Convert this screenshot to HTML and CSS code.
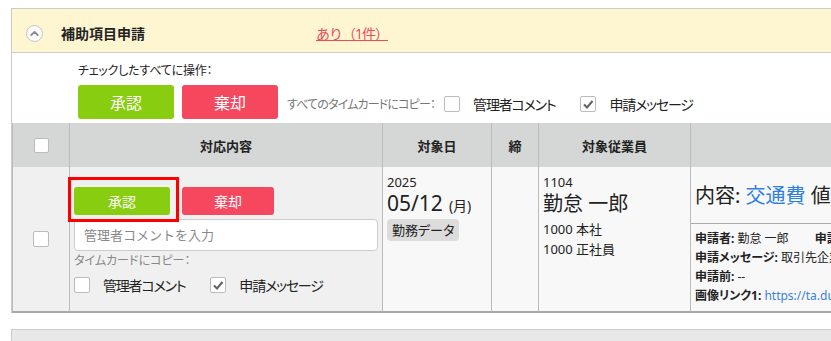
FILE: index.html
```html
<!DOCTYPE html>
<html>
<head>
    <title>補助項目申請</title>
    <link rel="stylesheet" href="styles.css">
</head>
<body>
    <div class="panel">
        <div class="panel-head">
            <span class="toggle">
                <svg width="17" height="17" viewBox="0 0 17 17"><circle cx="8.5" cy="8.5" r="8" fill="#fafafa" stroke="#c4c4c4"/><polyline points="5.3,10 8.5,6.9 11.7,10" fill="none" stroke="#8a8a8a" stroke-width="1.8" stroke-linecap="round" stroke-linejoin="round"/></svg>
            </span>
            <span class="panel-title">補助項目申請</span>
            <a class="count-link" href="#">あり（1件）</a>
        </div>

        <div class="bulk">
            <div class="bulk-label">チェックしたすべてに操作：</div>
            <div class="bulk-actions">
                <button class="btn btn-approve">承認</button>
                <button class="btn btn-reject">棄却</button>
                <div class="copy-group">
                    <span class="copy-label">すべてのタイムカードにコピー：</span>
                    <label class="check"><span class="box"></span>管理者コメント</label>
                    <label class="check check-wide"><span class="box"><svg width="14" height="14" viewBox="0 0 14 14"><polyline points="3,7.5 6,10.5 11.5,4" fill="none" stroke="#666" stroke-width="2.2"/></svg></span>申請メッセージ</label>
                </div>
            </div>
        </div>

        <div class="grid">
            <!-- header -->
            <div class="th"><span class="box"></span></div>
            <div class="th">対応内容</div>
            <div class="th">対象日</div>
            <div class="th">締</div>
            <div class="th">対象従業員</div>
            <div class="th th-last"></div>

            <!-- row -->
            <div class="td td-gray td-center"><span class="box"></span></div>
            <div class="td td-gray td-action">
                <div class="row-btns">
                    <button class="btn btn-sm btn-approve">承認</button>
                    <button class="btn btn-sm btn-reject btn-narrow">棄却</button>
                </div>
                <input class="comment" type="text" placeholder="管理者コメントを入力">
                <div class="copy-small">タイムカードにコピー：</div>
                <div class="row-checks">
                    <label class="check"><span class="box"></span>管理者コメント</label>
                    <label class="check check-wide"><span class="box"><svg width="14" height="14" viewBox="0 0 14 14"><polyline points="3,7.5 6,10.5 11.5,4" fill="none" stroke="#666" stroke-width="2.2"/></svg></span>申請メッセージ</label>
                </div>
                <div class="highlight"></div>
            </div>
            <div class="td td-date">
                <div class="small-num">2025</div>
                <div class="big-date">05/12<span class="dow">(月)</span></div>
                <span class="tag">勤務データ</span>
            </div>
            <div class="td"></div>
            <div class="td td-emp">
                <div class="small-num">1104</div>
                <div class="emp-name">勤怠 一郎</div>
                <div class="emp-line">1000 本社</div>
                <div class="emp-line">1000 正社員</div>
            </div>
            <div class="td td-detail">
                <div class="detail-top">内容: <span class="blue">交通費</span> 値段: 1,200円</div>
                <div class="detail-lines">
                    <div><b>申請者:</b> 勤怠 一郎<span class="spacer"></span><b>申請日時:</b> 2025/05/12 09:30</div>
                    <div><b>申請メッセージ:</b> 取引先企業訪問のため</div>
                    <div><b>申請前:</b> --</div>
                    <div><b>画像リンク1:</b> <a class="link" href="#">https://ta.dummy.example.jp/img/1</a></div>
                </div>
            </div>
        </div>
    </div>

    <div class="panel panel-next"></div>
</body>
</html>
```

FILE: styles.css
```css
body {
    margin: 0;
    overflow: hidden;
    font-family: "Noto Sans", "Noto Sans CJK JP", sans-serif;
    font-feature-settings: "palt";
    color: #222;
    background: #fff;
}
.panel {
    margin: 8px 0 0 11px;
    width: 1000px;
    border: 1px solid #ccc;
    border-bottom: none;
}
.panel-head {
    height: 44px;
    box-sizing: border-box;
    padding: 5px 0 0 14px;
    display: flex;
    align-items: center;
    background: #fef5d1;
    border-bottom: 1px solid #ccc;
}
.toggle {
    display: flex;
    width: 17px;
    height: 17px;
}
.panel-title {
    margin-left: 18px;
    width: 255px;
    font-size: 14px;
    font-weight: bold;
}
.count-link {
    font-size: 14px;
    color: #ee4a5e;
    text-decoration: underline;
    font-feature-settings: normal;
    letter-spacing: -1px;
}
.bulk {
    padding: 9px 0 4px 66px;
}
.bulk-label {
    font-size: 12px;
    line-height: 18px;
    letter-spacing: -0.2px;
}
.bulk-actions {
    display: flex;
    align-items: center;
    margin-top: 5px;
}
.btn {
    border: none;
    border-radius: 3px;
    color: #fff;
    font-family: inherit;
    font-size: 16px;
    width: 96px;
    height: 34px;
    padding: 0;
}
.btn-approve {
    background: #88cd10;
}
.btn-reject {
    background: #f5485f;
    margin-left: 8px;
}
.copy-group {
    display: flex;
    align-items: center;
    margin: 4px 0 0 9px;
}
.copy-label {
    font-size: 12px;
    color: #777;
    margin-right: 9px;
    letter-spacing: -0.85px;
}
.check {
    display: flex;
    align-items: center;
    font-size: 14px;
    letter-spacing: -1.2px;
}
.check-wide {
    margin-left: 25px;
}
.box {
    display: inline-flex;
    align-items: center;
    justify-content: center;
    width: 16px;
    height: 16px;
    box-sizing: border-box;
    border: 1px solid #bbb;
    border-radius: 2px;
    background: #fff;
}
.check .box {
    margin-right: 13px;
}
.grid {
    display: grid;
    grid-template-columns: 57px 313px 109px 47px 152px 300px;
    grid-template-rows: 44px 144px;
    border-left: 1px solid #bbb;
    border-bottom: 2px solid #a8a8a8;
}
.th, .td {
    box-sizing: border-box;
    border-right: 1px solid #bbb;
}
.th {
    background: #d5d6d6;
    font-size: 13px;
    font-weight: bold;
    display: flex;
    align-items: center;
    justify-content: center;
}
.th .box {
    width: 15px;
    height: 15px;
}
.th-last {
    border-right: none;
}
.td {
    background: #f8f8f8;
}
.td-gray {
    background: #f0f0f0;
}
.td-center {
    display: flex;
    align-items: center;
    justify-content: center;
}
.td-action {
    position: relative;
    padding: 20px 4px 0 4px;
}
.row-btns {
    display: flex;
}
.btn-sm {
    height: 28px;
    font-size: 14px;
}
.btn-narrow {
    width: 92px;
    margin-left: 12px;
}
.comment {
    display: block;
    margin-top: 4px;
    width: 304px;
    height: 32px;
    box-sizing: border-box;
    border: 1px solid #ccc;
    border-radius: 4px;
    padding: 0 9px;
    font-family: inherit;
    font-size: 13px;
    background: #fff;
}
.comment::placeholder {
    color: #888;
}
.copy-small {
    margin-top: 3px;
    font-size: 12px;
    line-height: 14px;
    color: #888;
}
.row-checks {
    display: flex;
    margin-top: 7px;
}
.highlight {
    position: absolute;
    left: -2px;
    top: 10px;
    width: 111px;
    height: 45px;
    box-sizing: border-box;
    border: 3px solid #f00;
}
.td-date, .td-emp {
    padding: 7px 4px 0 4px;
}
.small-num {
    font-size: 13px;
    line-height: 16px;
}
.big-date {
    font-size: 21px;
    line-height: 27px;
}
.dow {
    font-size: 14px;
    margin-left: 6px;
}
.tag {
    display: block;
    width: fit-content;
    padding: 0 5px;
    height: 22px;
    line-height: 22px;
    font-size: 13px;
    background: #dcdcdc;
    border-radius: 4px;
}
.emp-name {
    font-size: 20px;
    line-height: 27px;
}
.emp-line {
    font-size: 13px;
    line-height: 20px;
}
.emp-name + .emp-line {
    margin-top: 2px;
}
.td-detail {
    border-right: none;
    white-space: nowrap;
    overflow: hidden;
}
.detail-top {
    height: 57px;
    box-sizing: border-box;
    padding: 16px 0 0 4px;
    font-size: 20px;
    line-height: 26px;
    border-bottom: 1px solid #aaa;
}
.blue {
    color: #2f7fe0;
}
.detail-lines {
    padding: 5px 4px 0 4px;
    font-size: 12px;
    line-height: 19px;
}
.spacer {
    display: inline-block;
    width: 26px;
}
.link {
    color: #3a7fe0;
    text-decoration: none;
}
.panel-next {
    margin-top: 16px;
    height: 40px;
    background: #e8e8e8;
}
```
